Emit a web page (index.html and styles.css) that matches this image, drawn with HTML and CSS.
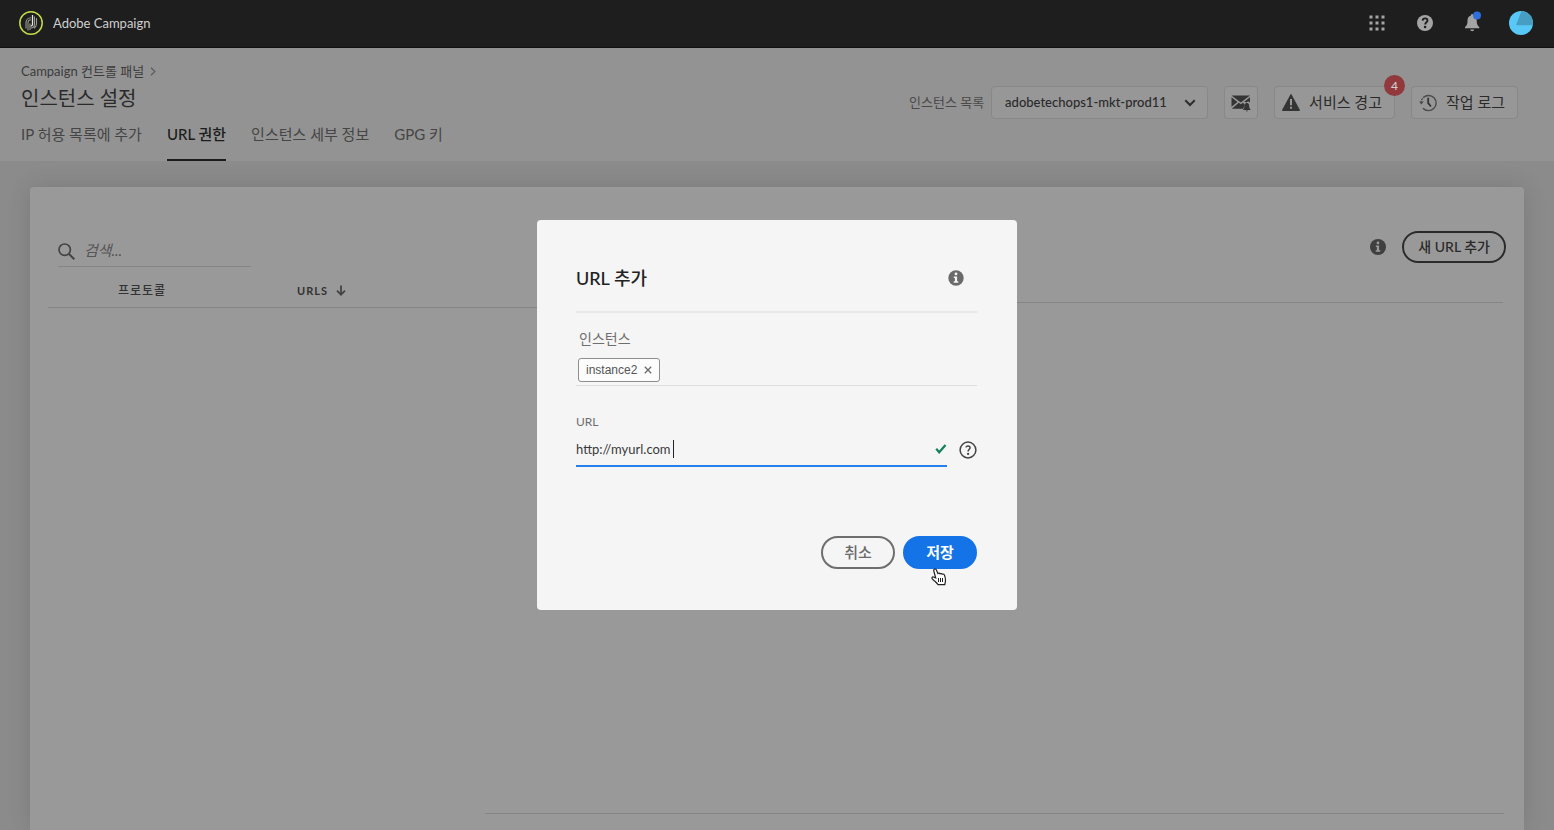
FILE: index.html
```html
<!DOCTYPE html>
<html lang="ko">
<head>
<meta charset="utf-8">
<title>Adobe Campaign</title>
<link rel="stylesheet" href="styles.css">
</head>
<body>
<header class="shell">
  <div class="brand">
    <svg class="brand-logo" width="24" height="24" viewBox="0 0 24 24" fill="none">
      <circle cx="12" cy="12" r="11.2" stroke="#c3dc4a" stroke-width="1.5"/>
      <path d="M9 19.500V13M7 17.500V11.500a5 5 0 0 1 5-4.800M9 13v-1.500a3 3 0 0 1 3-2.700M11 19V12.500" stroke="#9a9b92" stroke-width="1.100"/>
      <path d="M15.500 5.500V13a4 4 0 0 1-3.800 4M17.500 7V13a5.500 5.500 0 0 1-2.500 4.200" stroke="#9a9b92" stroke-width="1.100"/>
      <path d="M13.500 4v9.500q0 1.500-1.700 1.500" stroke="#e8e8e0" stroke-width="1.300"/>
    </svg>
    <span>Adobe Campaign</span>
  </div>
  <nav class="shell-tools" aria-label="도구">
    <button class="icon-button" aria-label="앱">
      <svg width="16" height="16" viewBox="0 0 16 16" fill="#a4a4a4"><path d="M.5.5h3v3h-3zM6.500.5h3v3h-3zM12.500.5h3v3h-3zM.5 6.500h3v3h-3zM6.500 6.500h3v3h-3zM12.500 6.500h3v3h-3zM.5 12.500h3v3h-3zM6.500 12.500h3v3h-3zM12.500 12.500h3v3h-3z"/></svg>
    </button>
    <button class="icon-button" aria-label="도움말">
      <svg viewBox="-2 0 16 16" width="16" height="16" overflow="visible"><circle cx="8" cy="8" r="8" fill="#a4a4a4"/><path d="M5.600 5.600C5.700 4.200 6.600 3.400 8 3.400s2.500.8 2.500 2.100c0 1.800-2.300 1.900-2.300 4" stroke="#1e1e1e" stroke-width="1.900" fill="none"/><circle cx="8.100" cy="12" r="1.300" fill="#1e1e1e"/></svg>
    </button>
    <button class="icon-button" aria-label="알림">
      <svg width="18" height="20" viewBox="-3 1 18 20" overflow="visible"><path d="M7 3.500C7 2.600 7.300 2 8 2s1.200.6 1.200 1.500C11.600 4.100 12.700 6 12.700 8.500c0 3.800.8 5 2.600 6.500v1.200H1V15c1.800-1.500 2.500-2.700 2.500-6.500C3.500 6 4.600 4.100 7 3.500zM6.200 17.500h4c-.2 1.100-1 1.700-2 1.700s-1.800-.6-2-1.700z" fill="#a4a4a4"/><circle cx="13" cy="3.500" r="4" fill="#2f6fdc"/></svg>
    </button>
    <button class="icon-button" aria-label="계정">
      <svg width="24" height="24" viewBox="0 0 24 24"><circle cx="12" cy="12" r="12" fill="#58c9f7"/><path d="M12.500 0.100A12 12 0 0 1 23.700 14.200H8.500Q6.800 14.200 7.500 12.700z" fill="#489ec2"/></svg>
    </button>
  </nav>
</header>

<section class="page-head">
  <div class="page-titles">
    <nav class="crumbs">
      <a href="#">Campaign 컨트롤 패널</a>
      <svg width="6" height="9" viewBox="0 0 6 9" fill="none" stroke="#5c5c5c" stroke-width="1.200"><path d="M1 .7l3.900 3.800L1 8.300"/></svg>
    </nav>
    <h1>인스턴스 설정</h1>
    <nav class="tabs">
      <a href="#">IP 허용 목록에 추가</a>
      <a href="#" class="active" aria-current="page">URL 권한</a>
      <a href="#">인스턴스 세부 정보</a>
      <a href="#">GPG 키</a>
    </nav>
  </div>
  <div class="actions">
    <div class="instance-picker">
      <label for="instance">인스턴스 목록</label>
      <div class="select-box">
        <select id="instance"><option>adobetechops1-mkt-prod11</option></select>
        <svg width="12" height="8" viewBox="0 0 12 8" fill="none" stroke="#2d2d2d" stroke-width="2"><path d="M1.300 1.300L6 6l4.700-4.700"/></svg>
      </div>
    </div>
    <button class="tool square" aria-label="이메일 알림">
      <svg width="20" height="18" viewBox="0 0 20 18" fill="#343434"><path d="M.5 1.500h18.500L9.800 8.600zM.5 3.200l6 4.700-6 4.800zM19 3.200v5.200c-1.500-1.300-2.800-.8-3.400.2l-2.400-.9zM.8 14.700l7-5.900 2 1.500 2.100-1.500 1.700 1.400-.4 2.500-1.200 2z"/><path d="M15.800 9c1.900.2 2.400 1.600 2.400 3.200 0 1.600.4 2.200 1.300 3v.8h-7.300v-.8c.8-.8 1.200-1.400 1.200-3 0-1.600.6-3 2.400-3.200zM14.900 16.500h2c-.1.700-.5 1-1 1s-.9-.3-1-1z"/></svg>
    </button>
    <button class="tool">
      <svg width="18" height="17" viewBox="0 0 18 17"><path d="M8.300.7q.7-1.200 1.400 0l8.100 15q.5 1.200-.8 1.200H1q-1.300 0-.8-1.200z" fill="#343434"/><path d="M8 5h2v6.300H8zM8 12.800h2v2H8z" fill="#979797"/></svg>
      <span class="tool-text">서비스 경고</span>
      <span class="badge">4</span>
    </button>
    <button class="tool">
      <svg width="18" height="18" viewBox="0 0 18 18" fill="none" stroke="#4a4a4a"><path d="M4.300 3.500A7.600 7.600 0 1 1 4 14.300" stroke-width="1.400"/><path d="M2.300 9.200C2 6.700 3 4.600 4.600 3.300" stroke-width="1.300" stroke-dasharray="2 1"/><path d="M.2 7.500h4.600L2.300 10.600z" fill="#4a4a4a" stroke="none"/><path d="M9.200 3.800v5.400l2.800 3.300" stroke="#343434" stroke-width="1.800"/></svg>
      <span class="tool-text">작업 로그</span>
    </button>
  </div>
</section>

<main class="stage">
  <section class="card">
    <div class="toolbar">
      <div class="search">
        <svg width="17" height="17" viewBox="0 0 17 17" fill="none" stroke="#444"><circle cx="6.700" cy="6.700" r="5.700" stroke-width="1.700"/><path d="M10.800 10.800l5.500 5.500" stroke-width="2"/></svg>
        <input type="search" placeholder="검색..." aria-label="검색">
      </div>
      <div class="toolbar-end">
        <svg width="16" height="16" viewBox="0 0 16 16"><circle cx="8" cy="8" r="8" fill="#3f3f3f"/><circle cx="8" cy="3.900" r="1.400" fill="#999"/><path d="M5.800 6.500h3.300v4.800h1.200v1.500H5.700v-1.500h1.200V8H5.800z" fill="#999"/></svg>
        <button class="pill outline-dark">새 URL 추가</button>
      </div>
    </div>
    <div class="table-row">
      <table>
        <thead>
          <tr>
            <th class="col-protocol">프로토콜</th>
            <th class="col-urls">URLS
              <svg width="10" height="11" viewBox="0 0 10 11" fill="none" stroke="#444" stroke-width="1.800"><path d="M5 .5v9M1 5.700l4 4 4-4"/></svg>
            </th>
          </tr>
        </thead>
      </table>
      <div class="table-rest"></div>
    </div>
    <div class="card-foot"></div>
  </section>
</main>

<div class="overlay">
  <form class="dialog" role="dialog" aria-labelledby="dialog-title">
    <div class="dialog-head">
      <h2 id="dialog-title">URL 추가</h2>
      <svg width="16" height="16" viewBox="0 0 16 16"><circle cx="8" cy="8" r="7.700" fill="#6a6a6a"/><circle cx="8" cy="3.900" r="1.400" fill="#f5f5f5"/><path d="M5.800 6.500h3.300v4.800h1.200v1.500H5.700v-1.500h1.200V8H5.800z" fill="#f5f5f5"/></svg>
    </div>
    <div class="field-label instance-label">인스턴스</div>
    <div class="tags">
      <span class="tag">instance2
        <button type="button" aria-label="instance2 제거">
          <svg width="8" height="8" viewBox="0 0 8 8" stroke="#6a6a6a" stroke-width="1.300"><path d="M.8.8l6.400 6.400M7.200.8L.8 7.200"/></svg>
        </button>
      </span>
    </div>
    <label class="field-label url-label" for="url">URL</label>
    <div class="url-row">
      <div class="url-box">
        <input id="url" type="text" value="http://myurl.com">
        <span class="caret"></span>
        <svg width="12" height="10" viewBox="0 0 12 10" fill="none" stroke="#12805c" stroke-width="2.200"><path d="M1.200 4.800l3 3.500L10.500 1"/></svg>
      </div>
      <svg width="18" height="18" viewBox="0 0 18 18" fill="none" stroke="#444"><circle cx="9" cy="9" r="7.900" stroke-width="1.500"/><path d="M6.900 6.400C7.200 5.300 8 4.900 9 4.900c1.300 0 2.100.7 2.100 1.800 0 1.500-2 1.700-2 3.800" stroke-width="1.500"/><circle cx="9.100" cy="12.900" r="1.100" fill="#444" stroke="none"/></svg>
    </div>
    <div class="dialog-actions">
      <button type="button" class="pill outline">취소</button>
      <button type="button" class="pill primary">저장
        <svg class="pointer" width="16" height="18" viewBox="0 0 16 18"><path d="M3.300 1.300c.8-.6 1.700-.3 2.100.6l1.500 3.700c.7-.6 1.700-.5 2.200.2.700-.5 1.700-.3 2.100.4.900-.4 1.800 0 2.200.8.900 2.200 1.300 3.900 1 6.300l-.6 3.400H7.100C5.500 14.300 3.400 12.600 1.500 11.200.3 10 1.200 8.600 2.500 9l2.200 1L2.800 3c-.2-.8 0-1.300.5-1.700z" fill="#fff" stroke="#222" stroke-width="1.200"/><path d="M7.500 10v4M9.500 10v4M11.500 10v4" stroke="#222" stroke-width="1"/></svg>
      </button>
    </div>
  </form>
</div>
</body>
</html>
```

FILE: styles.css
```css
* { box-sizing: border-box; }

body {
  margin: 0;
  min-height: 100vh;
  display: flex;
  flex-direction: column;
  background: #8b8b8b;
  color: #2a2a2a;
  font: 14px/20px Lato, "Noto Sans CJK KR", sans-serif;
}

button, input, select { font: inherit; color: inherit; margin: 0; }
button { cursor: pointer; }
a { color: inherit; text-decoration: none; }
svg { display: block; flex: none; }
h1, h2 { margin: 0; }

.shell {
  display: flex;
  justify-content: space-between;
  align-items: center;
  height: 48px;
  padding: 0 21px 1px 19px;
  background: #1e1e1e;
  border-bottom: 1px solid #111;
}
.brand { display: flex; align-items: center; gap: 10px; color: #cfcfcf; font-size: 13px; }
.shell-tools { display: flex; align-items: center; gap: 30px; }
.icon-button { padding: 0; border: 0; background: none; }

.page-head {
  display: flex;
  justify-content: space-between;
  padding: 12px 36px 0 21px;
  background: #939393;
}
.crumbs {
  display: flex;
  align-items: center;
  gap: 6px;
  font-size: 13px;
  line-height: 22px;
  color: #3c3c3c;
}
h1 { font-size: 20px; line-height: 32px; font-weight: 400; }
.tabs {
  display: flex;
  gap: 25px;
  margin-top: 8px;
  font-size: 15px;
  line-height: 24px;
  color: #454545;
}
.tabs a { padding-bottom: 13px; border-bottom: 2px solid transparent; }
.tabs .active { color: #1c1c1c; font-weight: 500; border-color: #1c1c1c; }

.actions { display: flex; align-items: flex-start; gap: 16px; padding-top: 26px; }
.instance-picker { display: flex; align-items: center; gap: 7px; }
.instance-picker label { padding-bottom: 2px; font-size: 13px; color: #4a4a4a; }
.select-box {
  display: grid;
  grid-template-columns: 100%;
  align-items: center;
  width: 217px;
}
.select-box > * { grid-area: 1 / 1; }
.select-box svg { justify-self: end; margin-right: 12px; pointer-events: none; }
select {
  appearance: none;
  width: 100%;
  height: 33px;
  padding: 0 32px 1px 13px;
  border: 1px solid #888;
  border-radius: 4px;
  background: #979797;
  font-size: 13px;
  font-weight: 500;
}
.tool {
  position: relative;
  display: flex;
  align-items: center;
  gap: 9px;
  height: 33px;
  padding: 0 12px 0 7px;
  border: 1px solid #888;
  border-radius: 4px;
  background: #979797;
  font-size: 15px;
}
.tool.square { padding: 0 6px; }
.tool-text { padding-bottom: 2px; }
.badge {
  position: absolute;
  top: -12px;
  right: -11px;
  width: 21px;
  border-radius: 11px;
  background: #91393d;
  color: #d0d0d0;
  font-size: 12px;
  line-height: 21px;
  font-weight: 500;
  text-align: center;
}

.stage { flex: 1; display: flex; padding: 26px 30px 0; }
.card {
  flex: 1;
  display: flex;
  flex-direction: column;
  padding: 44px 18px 16px;
  border-radius: 4px 4px 0 0;
  background: #999;
  box-shadow: 0 0 24px rgba(0, 0, 0, 0.12);
}
.toolbar {
  display: flex;
  justify-content: space-between;
  align-items: flex-start;
  padding-left: 10px;
}
.search {
  display: flex;
  align-items: center;
  gap: 9px;
  width: 193px;
  margin-top: 5px;
  border-bottom: 1px solid #858585;
}
.search input {
  flex: 1;
  min-width: 0;
  height: 30px;
  padding: 0 0 2px;
  border: 0;
  outline: 0;
  background: none;
}
.search input::placeholder { color: #555; font-style: italic; font-size: 15px; }
.toolbar-end { display: flex; align-items: center; gap: 16px; }

.pill {
  position: relative;
  height: 33px;
  padding: 0 0 2px;
  border: 2px solid;
  border-radius: 17px;
  background: none;
  font-size: 15px;
  line-height: 20px;
}
.outline-dark {
  height: 32px;
  padding: 0 14px;
  border-color: #2a2a2a;
  font-size: 14px;
  font-weight: 500;
}
.outline, .primary { width: 74px; }
.outline { border-color: #6e6e6e; color: #6a6a6a; font-weight: 500; }
.primary { border-color: #1473e6; background: #1473e6; color: #fff; font-weight: 700; }
.pointer { position: absolute; left: 26px; top: 30px; }

.table-row { display: flex; align-items: flex-start; padding-right: 3px; }
table {
  flex: 1;
  table-layout: fixed;
  border-collapse: collapse;
  border-bottom: 1px solid #858585;
}
th {
  height: 40px;
  padding: 8px 0 0;
  text-align: left;
  font-size: 12px;
  font-weight: 500;
  letter-spacing: 1px;
  color: #333;
}
th svg { display: inline-block; margin-left: 4px; vertical-align: -1px; }
.col-protocol { width: 249px; padding-left: 70px; }
.col-urls { font-size: 11px; font-weight: 700; }
.table-rest { flex: 1; height: 36px; border-bottom: 1px solid #858585; }
.card-foot {
  margin: auto 2px 0 437px;
  border-bottom: 1px solid #858585;
}

.overlay { position: fixed; inset: 0; display: grid; place-items: center; }
.dialog {
  width: 480px;
  padding: 39px 40px 41px 39px;
  border-radius: 4px;
  background: #f5f5f5;
}
.dialog-head {
  display: flex;
  justify-content: space-between;
  align-items: center;
  padding: 0 13px 14px 0;
  border-bottom: 2px solid #e8e8e8;
}
h2 { font-size: 18px; line-height: 38px; font-weight: 500; color: #222; }
.field-label { display: block; font-size: 14px; line-height: 20px; color: #6e6e6e; }
.instance-label { margin-top: 16px; padding-left: 3px; }
.tags {
  display: flex;
  margin-top: 9px;
  padding: 0 2px 3px;
  border-bottom: 1px solid #dedede;
}
.tag {
  display: flex;
  align-items: center;
  gap: 7px;
  height: 24px;
  padding: 0 7px;
  border: 1px solid #8e8e8e;
  border-radius: 3px;
  background: #fcfcfc;
  font: 12px/20px "Liberation Sans", Arial, sans-serif;
  color: #555;
}
.tag button { padding: 0; border: 0; background: none; }
.url-label { margin-top: 26px; font-size: 12px; }
.url-row { display: flex; align-items: center; gap: 12px; }
.url-box {
  position: relative;
  flex: 1;
  display: flex;
  align-items: center;
  height: 35px;
  border-bottom: 2px solid #2680eb;
}
.url-box input {
  flex: 1;
  min-width: 0;
  padding: 0;
  border: 0;
  outline: 0;
  background: none;
  font-size: 13px;
  color: #3a3a3a;
}
.caret {
  position: absolute;
  left: 97px;
  top: 8px;
  width: 1px;
  height: 18px;
  background: #222;
}
.dialog-actions {
  display: flex;
  justify-content: flex-end;
  gap: 8px;
  margin-top: 69px;
}
```
